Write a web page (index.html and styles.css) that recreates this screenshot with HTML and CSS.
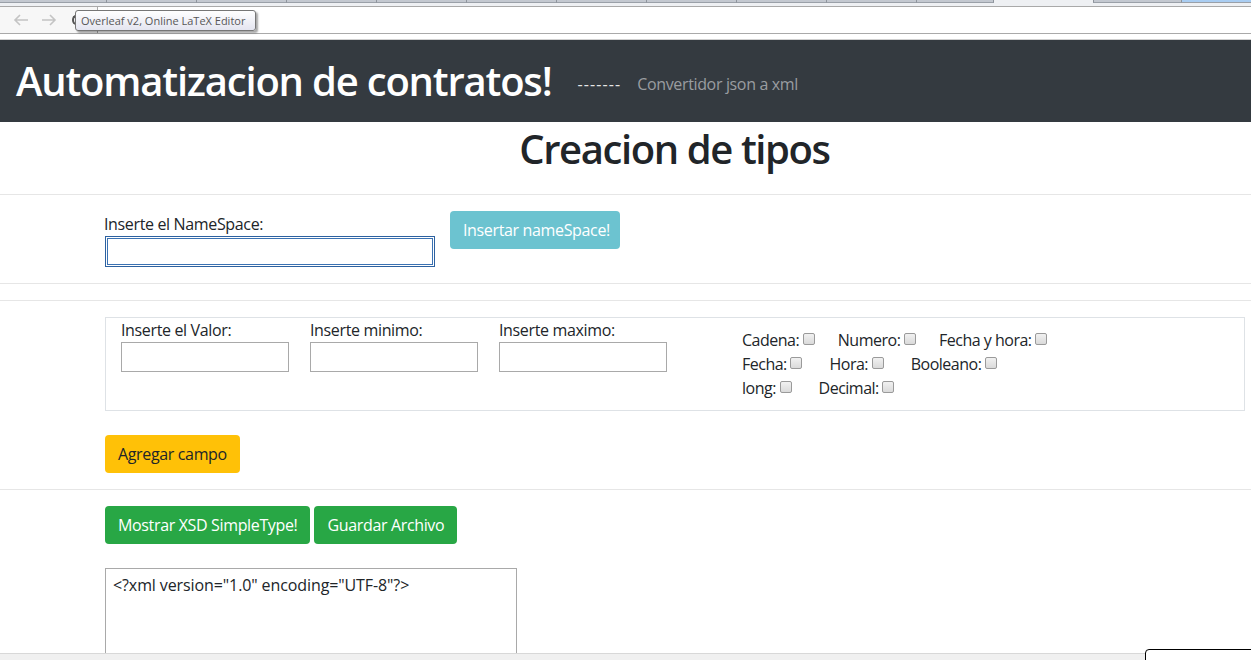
FILE: index.html
```html
<!DOCTYPE html>
<html lang="es">
<head>
<meta charset="utf-8">
<title>Automatizacion de contratos</title>
<link rel="stylesheet" href="styles.css">
</head>
<body>
<div class="chrome">
  <div class="tabstrip">
    <span class="tab t0"></span><span class="tab"></span><span class="tab"></span><span class="tab"></span><span class="tab"></span><span class="tab"></span><span class="tab"></span><span class="tab"></span><span class="tab"></span><span class="tab"></span><span class="tab last"></span>
    <span class="tabgap"></span>
    <span class="tab grey2"></span>
    <span class="tab blue"></span>
  </div>
  <div class="toolbar">
    <div class="navbtns">
      <svg class="arrow" width="18" height="16" viewBox="0 0 18 16"><path d="M16 8H3M8 3L3 8l5 5" fill="none" stroke="#c4c4c4" stroke-width="1.6"/></svg>
      <svg class="arrow" width="18" height="16" viewBox="0 0 18 16"><path d="M2 8h13M10 3l5 5-5 5" fill="none" stroke="#c4c4c4" stroke-width="1.6"/></svg>
      <span class="reload"></span>
    </div>
    <div class="omnibox"></div>
  </div>
  <div class="tooltip">Overleaf v2, Online LaTeX Editor</div>
</div>

<header class="topbar">
  <h1 class="brand">Automatizacion de contratos!</h1>
  <span class="dashes">-------</span>
  <span class="subtitle">Convertidor json a xml</span>
</header>

<main class="page">
  <h2 class="title">Creacion de tipos</h2>
  <hr class="rule">
  <section class="ns-row">
    <div class="ns-field">
      <label class="lbl ns-lbl">Inserte el NameSpace:</label>
      <input class="ns-input" type="text">
    </div>
    <button class="btn btn-info">Insertar nameSpace!</button>
  </section>
  <hr class="rule">
  <hr class="rule gap16">

  <section class="fieldbox">
    <div class="col">
      <label class="lbl">Inserte el Valor:</label>
      <input class="field" type="text">
    </div>
    <div class="col">
      <label class="lbl">Inserte minimo:</label>
      <input class="field" type="text">
    </div>
    <div class="col">
      <label class="lbl">Inserte maximo:</label>
      <input class="field" type="text">
    </div>
    <div class="types">
      <div class="trow">
        <label class="chk">Cadena: <input type="checkbox"></label>
        <label class="chk">Numero: <input type="checkbox"></label>
        <label class="chk">Fecha y hora: <input type="checkbox"></label>
      </div>
      <div class="trow w28">
        <label class="chk">Fecha: <input type="checkbox"></label>
        <label class="chk">Hora: <input type="checkbox"></label>
        <label class="chk">Booleano: <input type="checkbox"></label>
      </div>
      <div class="trow w28">
        <label class="chk">long: <input type="checkbox"></label>
        <label class="chk">Decimal: <input type="checkbox"></label>
      </div>
    </div>
  </section>

  <div class="add-row">
    <button class="btn btn-warning">Agregar campo</button>
  </div>
  <hr class="rule">
  <div class="actions">
    <button class="btn btn-success">Mostrar XSD SimpleType!</button>
    <button class="btn btn-success">Guardar Archivo</button>
  </div>
  <textarea class="output">&lt;?xml version="1.0" encoding="UTF-8"?&gt;</textarea>
</main>

<div class="hscroll"></div>
<div class="statusbox"></div>
</body>
</html>
```

FILE: styles.css
```css
* { box-sizing: border-box; }
html, body { margin: 0; padding: 0; }
body {
  font-family: "Open Sans", "Noto Sans", "Liberation Sans", sans-serif;
  font-size: 16px;
  letter-spacing: -0.35px;
  color: #212529;
  background: #fff;
  width: 1251px;
  height: 660px;
  overflow: hidden;
  position: relative;
}

/* ---------- browser chrome ---------- */
.chrome { height: 40px; position: relative; background: #fff; }
.tabstrip {
  height: 7px;
  background: #eef0f3;
  display: flex;
  align-items: flex-start;
  border-bottom: 1px solid #a9a9a9;
  overflow: hidden;
}
.tab {
  width: 90px;
  height: 3px;
  background: #c3c8d0;
  border-right: 1px solid #8e949c;
  border-bottom: 1px solid #9aa0a8;
  flex: none;
}
.tab.t0 { width: 107px; }
.tab.last { width: 77px; }
.tabgap { width: 99px; flex: none; }
.tab.grey2 { width: 89px; border-left: 1px solid #8e949c; }
.tab.blue { width: 80px; background: #a9cdf2; border-right: none; }
.toolbar {
  height: 27px;
  display: flex;
  border-bottom: 1px solid #a9a9a9;
}
.navbtns {
  width: 97px;
  display: flex;
  align-items: center;
  padding-left: 12px;
  gap: 10px;
  background: #f7f7f7;
}
.reload {
  width: 8px; height: 10px;
  border: 2px solid #555;
  border-right-color: transparent;
  border-radius: 50%;
  margin-left: 4px;
}
.omnibox {
  flex: 1;
  border-left: 1px solid #a9a9a9;
  background: #fff;
}
.chrome::after {
  content: "";
  position: absolute;
  left: 0; right: 0; top: 39px;
  height: 1px;
  background: #cfcfcf;
}
.tooltip {
  position: absolute;
  left: 75px; top: 10px;
  height: 21px;
  width: 181px;
  padding: 0 5px;
  font-family: "Open Sans", "Noto Sans", sans-serif;
  font-size: 11px;
  letter-spacing: 0;
  line-height: 19px;
  color: #575757;
  background: linear-gradient(#ffffff, #e4e5f0);
  border: 1px solid #767676;
  border-radius: 3px;
  box-shadow: 2px 2px 2px rgba(0,0,0,0.35);
  white-space: nowrap;
}

/* ---------- top bar ---------- */
.topbar {
  height: 82px;
  background: #343a40;
  display: flex;
  align-items: center;
  padding-left: 16px;
}
.brand {
  margin: 0;
  color: #fff;
  font-size: 40px;
  font-weight: 600;
  letter-spacing: -1.2px;
  line-height: 48px;
}
.dashes {
  color: #e6e6e6;
  margin-left: 26px;
  margin-top: 6px;
  letter-spacing: 1.1px;
}
.subtitle {
  color: #9a9da0;
  margin-left: 16px;
  margin-top: 6px;
}

/* ---------- page ---------- */
.title {
  margin: 0;
  height: 72px;
  padding: 3px 0 0 98px;
  text-align: center;
  font-size: 40px;
  font-weight: 600;
  letter-spacing: -1.4px;
  line-height: 48px;
  color: #212529;
}
.rule {
  margin: 0;
  border: 0;
  border-top: 1px solid #e6e6e6;
  height: 0;
}
.gap16 { margin-top: 16px; }

.ns-row {
  display: flex;
  align-items: flex-start;
  padding: 16px 0 16px 104px;
}
.ns-field { display: flex; flex-direction: column; }
.lbl { display: block; line-height: 24px; }
.ns-lbl { margin-top: 1px; }
.ns-input {
  width: 330px;
  height: 31px;
  margin-left: 1px;
  border: 1px solid #2d61a0;
  box-shadow: inset 0 0 0 1px #fff, inset 0 0 0 2px #3b72b3;
  outline: none;
  padding: 0;
}
.btn {
  font-family: inherit;
  font-size: 16px;
  letter-spacing: -0.35px;
  line-height: 24px;
  padding: 6px 12px;
  border: 1px solid transparent;
  border-radius: 4px;
  height: 38px;
  white-space: nowrap;
}
.btn-info {
  margin-left: 15px;
  background: #6cc3d0;
  color: #fff;
  width: 170px;
}
.btn-warning { background: #ffc107; color: #212529; }
.btn-success { background: #28a745; color: #fff; }

.fieldbox {
  margin: 16px 6px 0 105px;
  height: 94px;
  border: 1px solid #dee2e6;
  display: flex;
  align-items: flex-start;
  padding-left: 15px;
}
.col { width: 189px; flex: none; }
.field {
  display: block;
  width: 168px;
  height: 30px;
  border: 1px solid #a9a9a9;
  padding: 0;
}
.types {
  margin-left: 54px;
  margin-top: 10px;
}
.trow { display: flex; gap: 23px; line-height: 24px; letter-spacing: -0.5px; }
.trow.w28 { gap: 27px; }
.chk { white-space: nowrap; }
.chk input {
  appearance: none;
  -webkit-appearance: none;
  width: 12px;
  height: 12px;
  margin: 0;
  vertical-align: 1px;
  border: 1px solid #9a9a9a;
  border-radius: 2px;
  background: linear-gradient(#f1f1f1, #dadada);
}

.add-row { padding: 24px 0 16px 105px; }
.actions { display: flex; gap: 4px; padding: 16px 0 0 105px; }
.output {
  display: block;
  margin: 24px 0 0 105px;
  width: 412px;
  height: 120px;
  border: 1px solid #a9a9a9;
  padding: 5px 7px;
  font-family: inherit;
  font-size: 16px;
  letter-spacing: -0.1px;
  color: #212529;
  resize: none;
}

.hscroll {
  position: absolute;
  left: 0; top: 653px;
  width: 1145px; height: 7px;
  background: #f0f0f0;
  border-top: 1px solid #d8d8d8;
}
.statusbox {
  position: absolute;
  left: 1145px; top: 649px;
  width: 110px; height: 20px;
  background: #fff;
  border: 1px solid #000;
  border-top-left-radius: 4px;
}
```
